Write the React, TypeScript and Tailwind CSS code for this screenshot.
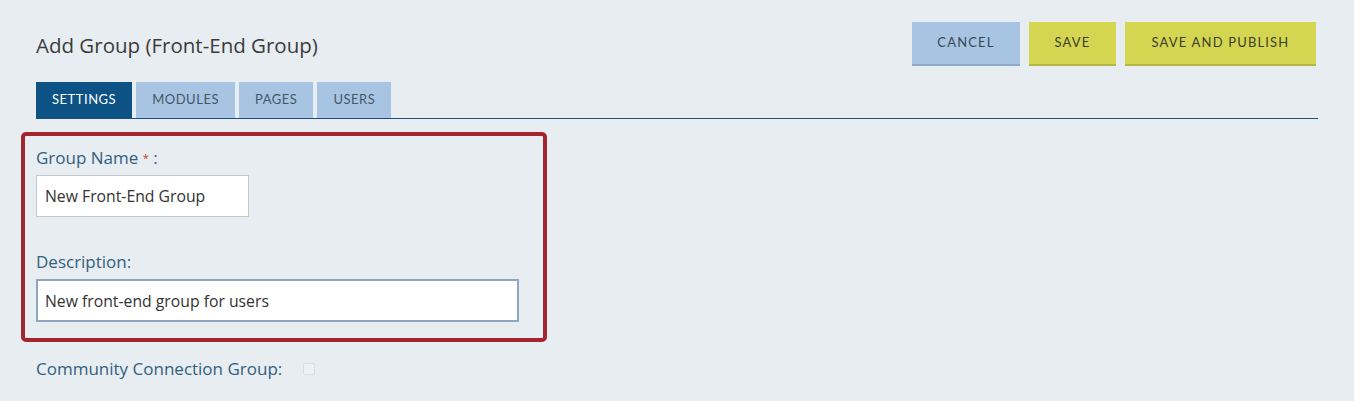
import React, { useState } from 'react';

const tabs = ['Settings', 'Modules', 'Pages', 'Users'];

export default function App() {
  const [active, setActive] = useState('Settings');
  const [name, setName] = useState('New Front-End Group');
  const [desc, setDesc] = useState('New front-end group for users');
  const [community, setCommunity] = useState(false);

  return (
    <div className="min-h-[401px] w-full bg-[#e8edf1] font-['Open_Sans',sans-serif]">
      <div className="px-[36px] pt-[22px]">
        <div className="flex items-start justify-between pr-[2px]">
          <h1 className="mt-[9px] text-[20.5px] leading-[28px] text-[#3b3b3b]">Add Group (Front-End Group)</h1>
          <div className="flex gap-[9px] font-['Lato',sans-serif]">
            <button className="h-[44px] w-[108px] border-b-2 border-[#8fa9c4] bg-[#a7c5e3] text-[13px] uppercase tracking-[0.09em] text-[#3b4652]">
              Cancel
            </button>
            <button className="h-[44px] w-[87px] border-b-2 border-[#b3b640] bg-[#d4d651] text-[13px] uppercase tracking-[0.09em] text-[#3d3d2a]">
              Save
            </button>
            <button className="h-[44px] w-[191px] border-b-2 border-[#b3b640] bg-[#d4d651] text-[13px] uppercase tracking-[0.09em] text-[#3d3d2a]">
              Save and Publish
            </button>
          </div>
        </div>

        <div className="mt-[16px] flex gap-[4px] border-b border-[#1d4f78] pr-[2px] font-['Lato',sans-serif]">
          {tabs.map((t) => (
            <button
              key={t}
              onClick={() => setActive(t)}
              className={
                active === t
                  ? 'h-[36px] px-[16px] bg-[#0c5285] text-[13px] uppercase tracking-[0.04em] text-white'
                  : 'h-[36px] px-[16px] bg-[#a7c5e3] text-[13px] uppercase tracking-[0.04em] text-[#475563]'
              }
            >
              {t}
            </button>
          ))}
        </div>
      </div>

      <div className="pl-[21px] pt-[13px]">
        <div className="w-[526px] rounded-[5px] border-4 border-[#a3262e] px-[11px] pt-[9px] pb-[16px]">
          <label className="block text-[17px] leading-[25px] text-[#32607f]">
            Group Name <span className="align-top text-[11px] text-[#c0392b]">*</span> :
          </label>
          <input
            value={name}
            onChange={(e) => setName(e.target.value)}
            className="mt-[5px] h-[42px] w-[213px] border border-[#c3c8cc] bg-white px-[8px] text-[15.75px] text-[#333] outline-none"
          />
          <label className="mt-[32px] block text-[17px] leading-[25px] text-[#32607f]">Description:</label>
          <input
            autoFocus
            value={desc}
            onChange={(e) => setDesc(e.target.value)}
            className="mt-[5px] h-[43px] w-[483px] border-2 border-[#8ea6bf] bg-white px-[7px] text-[15.75px] text-[#333] caret-[#222] outline-none"
          />
        </div>
      </div>

      <div className="flex items-center gap-[21px] px-[36px] pt-[14px]">
        <span className="text-[17px] leading-[25px] text-[#32607f]">Community Connection Group:</span>
        <input
          type="checkbox"
          checked={community}
          onChange={(e) => setCommunity(e.target.checked)}
          className="h-[12px] w-[12px] appearance-none rounded-[2px] border border-[#d6dde3] bg-[#eef2f5]"
        />
      </div>
    </div>
  );
}
